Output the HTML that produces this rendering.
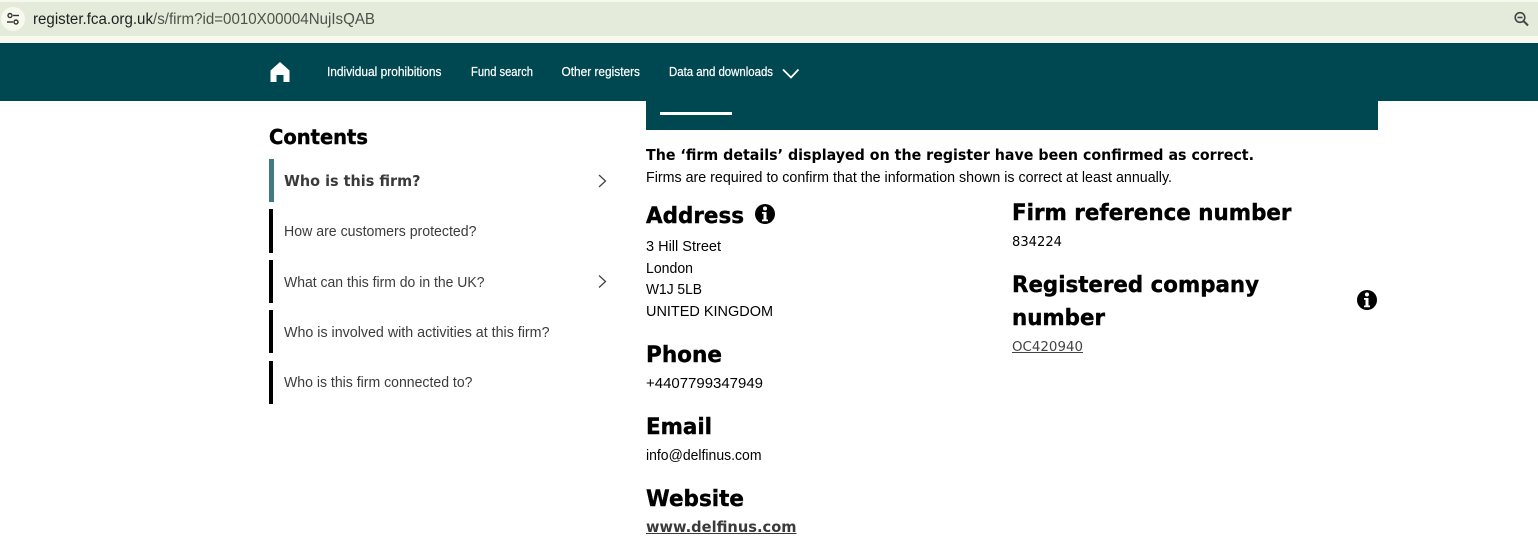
<!DOCTYPE html>
<html lang="en">
<head>
<meta charset="utf-8">
<title>FCA Register</title>
<style>
html,body{margin:0;padding:0;background:#fff;width:1538px;height:546px;overflow:hidden}
svg{display:block}
.l{font-family:"Liberation Sans",sans-serif;font-size:14.5px;fill:#000}
.m{font-family:"Liberation Sans",sans-serif;font-size:14.5px;fill:#3c3c3c}
.n{font-family:"Liberation Sans",sans-serif;font-size:12.5px;fill:#fff;stroke:#fff;stroke-width:.2px}
.h{font-family:"DejaVu Sans",sans-serif;font-weight:700;font-size:22px;fill:#000;stroke:#000;stroke-width:.4px}
.b{font-family:"DejaVu Sans",sans-serif;font-weight:700;font-size:15px}
.v{font-family:"DejaVu Sans",sans-serif;font-size:13.5px}
.u{font-family:"Liberation Sans",sans-serif;font-size:15.5px}
</style>
</head>
<body>
<svg width="1538" height="546" viewBox="0 0 1538 546" xmlns="http://www.w3.org/2000/svg">
<rect width="1538" height="546" fill="#fff"/>
<!-- browser bar -->
<rect width="1538" height="43" fill="#f7f9ef"/>
<rect x="-20" y="2" width="1600" height="34" rx="17" fill="#e4ebda"/>
<circle cx="13" cy="19" r="12" fill="#f7f9ef"/>
<g fill="none" stroke="#333" stroke-width="1.4">
<circle cx="10" cy="15.5" r="2"/><path d="M13 15.5h6"/>
<circle cx="16" cy="22" r="2"/><path d="M7 22h6"/>
</g>
<text class="u" x="33" y="24" fill="#1f1f1f" textLength="120" lengthAdjust="spacingAndGlyphs">register.fca.org.uk</text>
<text class="u" x="153" y="24" fill="#4d5348" textLength="222" lengthAdjust="spacingAndGlyphs">/s/firm?id=0010X00004NujIsQAB</text>
<g fill="none" stroke="#444" stroke-width="1.6">
<circle cx="1520" cy="17.5" r="4.8"/><path d="M1523.500 21l4.500 4.500" stroke-width="2"/><path d="M1517.500 17.500h5"/>
</g>
<!-- nav -->
<rect y="43" width="1538" height="58" fill="#004851"/>
<path d="M280 62 L289.500 70.500 V82 H283.500 V75 H276.500 V82 H270.500 V70.500 Z" fill="#fff"/>
<text class="n" x="327" y="76" textLength="114.500" lengthAdjust="spacingAndGlyphs">Individual prohibitions</text>
<text class="n" x="471" y="76" textLength="62" lengthAdjust="spacingAndGlyphs">Fund search</text>
<text class="n" x="561.500" y="76" textLength="78.500" lengthAdjust="spacingAndGlyphs">Other registers</text>
<text class="n" x="669" y="76" textLength="104" lengthAdjust="spacingAndGlyphs">Data and downloads</text>
<path d="M783 69.500 L791 77.500 L798.500 69.500" fill="none" stroke="#fff" stroke-width="1.800"/>
<!-- tab band -->
<rect x="646" y="101" width="732" height="29" fill="#004851"/>
<rect x="660" y="112" width="72" height="3" fill="#fff"/>
<!-- sidebar -->
<text class="h" x="269" y="144" textLength="99" lengthAdjust="spacingAndGlyphs" style="font-size:20px">Contents</text>
<rect x="269" y="159" width="5" height="43" fill="#417a80"/>
<rect x="269" y="209" width="4" height="44" fill="#000"/>
<rect x="269" y="260" width="4" height="43" fill="#000"/>
<rect x="269" y="310" width="4" height="43" fill="#000"/>
<rect x="269" y="361" width="4" height="43" fill="#000"/>
<text class="b" x="284" y="186" fill="#3a3a3a" textLength="136.500" lengthAdjust="spacingAndGlyphs">Who is this firm?</text>
<text class="m" x="284" y="236" textLength="192.500" lengthAdjust="spacingAndGlyphs">How are customers protected?</text>
<text class="m" x="284" y="287" textLength="200.500" lengthAdjust="spacingAndGlyphs">What can this firm do in the UK?</text>
<text class="m" x="284" y="337" textLength="265.500" lengthAdjust="spacingAndGlyphs">Who is involved with activities at this firm?</text>
<text class="m" x="284" y="387" textLength="188.500" lengthAdjust="spacingAndGlyphs">Who is this firm connected to?</text>
<g fill="none" stroke="#444" stroke-width="1.300">
<path d="M599 175 L605.500 181 L599 187"/>
<path d="M599 275.500 L605.500 281.500 L599 287.500"/>
</g>
<!-- main -->
<text class="b" x="646" y="160" fill="#000" textLength="608" lengthAdjust="spacingAndGlyphs">The ‘firm details’ displayed on the register have been confirmed as correct.</text>
<text class="l" x="646" y="182" textLength="526" lengthAdjust="spacingAndGlyphs">Firms are required to confirm that the information shown is correct at least annually.</text>
<text class="h" x="646" y="223" textLength="98" lengthAdjust="spacingAndGlyphs">Address</text>
<g>
<circle cx="765" cy="214" r="10" fill="#000"/>
<circle cx="765" cy="208.500" r="2" fill="#fff"/>
<path d="M762 212h4.500v7.500h1.500v1.800h-6v-1.800h1.500v-5.700h-1.500z" fill="#fff"/>
</g>
<text class="l" x="646" y="251" textLength="75" lengthAdjust="spacingAndGlyphs">3 Hill Street</text>
<text class="l" x="646" y="273" textLength="47" lengthAdjust="spacingAndGlyphs">London</text>
<text class="l" x="646" y="294" textLength="56" lengthAdjust="spacingAndGlyphs">W1J 5LB</text>
<text class="l" x="646" y="316" textLength="127" lengthAdjust="spacingAndGlyphs">UNITED KINGDOM</text>
<text class="h" x="646" y="362" textLength="76" lengthAdjust="spacingAndGlyphs">Phone</text>
<text class="l" x="646" y="388" textLength="117" lengthAdjust="spacingAndGlyphs">+4407799347949</text>
<text class="h" x="646" y="434" textLength="66" lengthAdjust="spacingAndGlyphs">Email</text>
<text class="l" x="646" y="460" textLength="115.500" lengthAdjust="spacingAndGlyphs">info@delfinus.com</text>
<text class="h" x="646" y="506" textLength="98" lengthAdjust="spacingAndGlyphs">Website</text>
<text class="b" x="646" y="532" fill="#3a3a3a" textLength="150.500" lengthAdjust="spacingAndGlyphs">www.delfinus.com</text>
<rect x="646" y="533" width="150.500" height="1" fill="#3a3a3a"/>
<!-- right column -->
<text class="h" x="1012" y="220" textLength="279.500" lengthAdjust="spacingAndGlyphs">Firm reference number</text>
<text class="v" x="1012" y="246" fill="#000" textLength="50" lengthAdjust="spacingAndGlyphs">834224</text>
<text class="h" x="1012" y="292" textLength="247" lengthAdjust="spacingAndGlyphs">Registered company</text>
<text class="h" x="1012" y="325" textLength="93" lengthAdjust="spacingAndGlyphs">number</text>
<g>
<circle cx="1367" cy="300" r="10" fill="#000"/>
<circle cx="1367" cy="294.500" r="2" fill="#fff"/>
<path d="M1364 298h4.500v7.500h1.500v1.800h-6v-1.800h1.500v-5.700h-1.500z" fill="#fff"/>
</g>
<text class="v" x="1012" y="351" fill="#444" textLength="71" lengthAdjust="spacingAndGlyphs">OC420940</text>
<rect x="1012" y="352" width="71" height="1" fill="#444"/>
</svg>
</body>
</html>
